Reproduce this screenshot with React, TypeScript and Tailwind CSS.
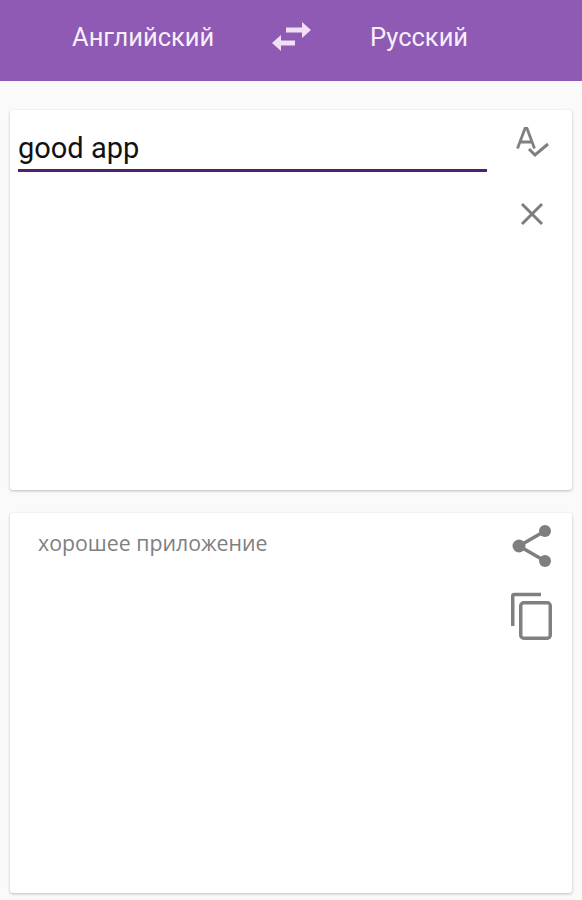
export default function App() {
  return (
    <div className="flex h-[900px] w-[582px] flex-col overflow-hidden bg-[#fafafa] font-['Roboto',sans-serif]">
      <header className="flex h-[81px] shrink-0 items-center bg-[#8e5ab4] pb-[7px] text-[25.5px] text-[#f6effa]">
        <div className="ml-[72px] w-[142px] whitespace-nowrap">Английский</div>
        <svg className="ml-[56px] h-[34px] w-[42px]" viewBox="0 0 42 34" fill="#f0dff5">
          <path d="M16 7.5h16V2l9 8-9 8v-5.5H16z" />
          <path d="M25 20.5H11V15l-9 8 9 8v-5.5h14z" />
        </svg>
        <div className="ml-[58px] whitespace-nowrap">Русский</div>
      </header>
      <main className="flex flex-col gap-[23px] px-[10px] pt-[29px]">
        <section className="flex h-[380px] rounded-[3px] bg-white pl-[8px] pr-[22px] shadow-[0_1px_3px_rgba(0,0,0,0.25)]">
          <div className="w-[469px] pt-[19px]">
            <div className="h-[43px] border-b-[3px] border-[#4f2170] text-[29px] leading-[38px] text-[#111111]">good app</div>
          </div>
          <div className="ml-auto flex flex-col items-center pt-[17px]">
            <svg className="h-[36px] w-[36px]" viewBox="0 0 36 36" fill="none" stroke="#808080" strokeWidth="3">
              <path d="M3.5 21.5 11 1.5h2L20.5 21.5M6.5 15h11" strokeWidth="2.8" />
              <path d="M15 22l6 6L34 17" />
            </svg>
            <svg className="mt-[38px] h-[26px] w-[26px]" viewBox="0 0 26 26" fill="none" stroke="#7d7d7d" strokeWidth="3">
              <path d="M3 3l20 20M23 3 3 23" />
            </svg>
          </div>
        </section>
        <section className="flex h-[380px] rounded-[3px] bg-white pr-[20px] shadow-[0_1px_3px_rgba(0,0,0,0.25)]">
          <div className="pl-[28px] pt-[15px] font-['Open_Sans',sans-serif] text-[21.3px] leading-[30px] text-[#7f7f7f]">хорошее приложение</div>
          <div className="ml-auto flex flex-col items-center pt-[11px]">
            <svg className="h-[44px] w-[44px]" viewBox="0 0 44 44" fill="#7f7f7f">
              <circle cx="37" cy="7" r="6" />
              <circle cx="11" cy="22" r="6.5" />
              <circle cx="37" cy="37" r="6" />
              <path d="M37 7 11 22l26 15" fill="none" stroke="#7f7f7f" strokeWidth="3.5" />
            </svg>
            <svg className="mt-[24px] h-[48px] w-[44px]" viewBox="0 0 44 48" fill="none" stroke="#808080" strokeWidth="3.5">
              <path d="M4.75 34V4a1.5 1.5 0 0 1 1.5-1.5H33" />
              <rect x="12.75" y="10.75" width="29.5" height="35.5" rx="3" />
            </svg>
          </div>
        </section>
      </main>
    </div>
  );
}
